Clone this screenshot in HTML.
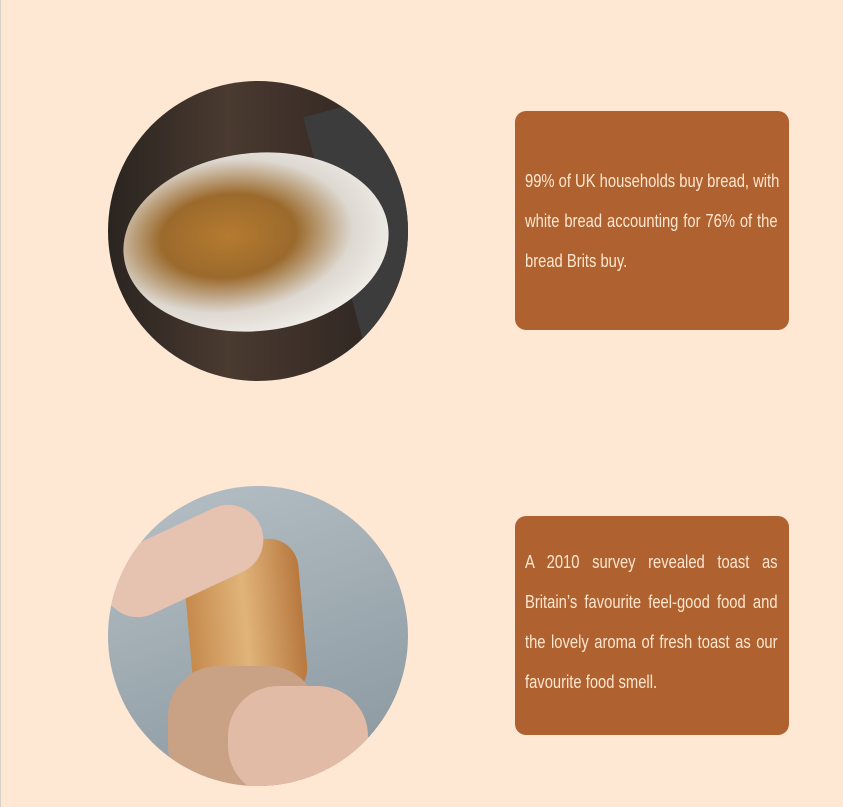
<!DOCTYPE html>
<html><head><style>
html,body{margin:0;padding:0}
body{width:843px;height:807px;background:#fee8d4;position:relative;overflow:hidden;font-family:"Liberation Sans",sans-serif;border-left:1px solid #d8cfc6;box-sizing:border-box}
.c{position:absolute;width:300px;height:300px;border-radius:50%;overflow:hidden;left:107px}
.b{position:absolute;left:514px;width:274px;background:#af6230;border-radius:11px}
.t{position:absolute;left:10px;width:308px;transform:scaleX(0.82);transform-origin:left top;color:#fde6cf;font-size:18px;line-height:40px}
.t div{text-align:justify;text-align-last:justify;white-space:nowrap}
.t div.l{text-align-last:left}
</style></head><body>
<div class="c" style="top:81px;background:linear-gradient(90deg,#2a2420,#4a3a30 40%,#3a2e27 70%,#2b2522)">
 <div style="position:absolute;right:-20px;top:20px;width:90px;height:280px;background:#3c3c3c;transform:rotate(-15deg)"></div>
 <div style="position:absolute;left:15px;top:72px;width:266px;height:178px;border-radius:50%;background:radial-gradient(ellipse at 40% 45%,#b57a30 0,#9b6a2c 30%,#ddd8d0 55%,#f0ede8 75%,#b9b3ab 100%);transform:rotate(-6deg)"></div>
</div>
<div class="b" style="top:111px;height:219px"><div class="t" style="top:50px">
<div>99% of UK households buy bread, with</div><div>white bread accounting for 76% of the</div><div class="l">bread Brits buy.</div></div></div>
<div class="c" style="top:486px;background:linear-gradient(160deg,#b6c0c6,#9aa6ad 60%,#8a969d)">
 <div style="position:absolute;left:80px;top:55px;width:115px;height:160px;border-radius:30px;background:linear-gradient(90deg,#c68a4c,#e0b47a 50%,#b8783e);transform:rotate(-5deg)"></div>
 <div style="position:absolute;left:-10px;top:40px;width:170px;height:70px;border-radius:40px;background:#e6c3b0;transform:rotate(-25deg)"></div>
 <div style="position:absolute;left:60px;top:180px;width:150px;height:130px;border-radius:50px;background:#c9a184"></div>
 <div style="position:absolute;left:120px;top:200px;width:140px;height:110px;border-radius:50px;background:#e2bba6"></div>
</div>
<div class="b" style="top:516px;height:219px"><div class="t" style="top:26px">
<div>A 2010 survey revealed toast as</div><div>Britain’s favourite feel-good food and</div><div>the lovely aroma of fresh toast as our</div><div class="l">favourite food smell.</div></div></div>
</body></html>
